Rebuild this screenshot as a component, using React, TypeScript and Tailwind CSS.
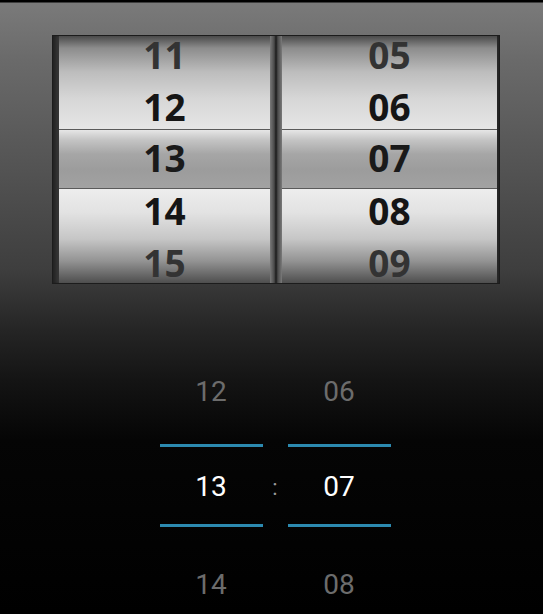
const font = { fontFamily: '"Open Sans", "DejaVu Sans", sans-serif' };
const roboto = { fontFamily: 'Roboto, "Liberation Sans", sans-serif' };

type WheelProps = { values: string[]; className?: string };

const digit = "flex items-center justify-center text-[37px] font-bold leading-none";

function Wheel({ values, className = "" }: WheelProps) {
  const [a, b, c, d, e] = values;
  return (
    <div
      className={`flex flex-col h-full shadow-[inset_6px_0_5px_-3px_rgba(0,0,0,0.45),inset_-6px_0_5px_-3px_rgba(0,0,0,0.45)] ${className}`}
      style={font}
    >
      {/* above selection */}
      <div className="h-[93px] flex flex-col bg-[linear-gradient(to_bottom,#4a4a4a_0px,#8c8c8c_12px,#bdbdbd_36px,#d6d6d6_62px,#e6e6e6_93px)]">
        <div className={`h-[40px] pb-[4px] ${digit} text-[#333]`}>{a}</div>
        <div className={`h-[53px] pt-[7px] ${digit} text-[#151515]`}>{b}</div>
      </div>
      {/* selection band */}
      <div
        className={`h-[60px] pb-[4px] border-y border-[#5a5a5a] ${digit} bg-[linear-gradient(to_bottom,#e6e6e6_0px,#c4c4c4_10px,#a6a6a6_24px,#9c9c9c_40px,#a2a2a2_58px)] text-[#1a1a1a]`}
      >
        {c}
      </div>
      {/* below selection */}
      <div className="flex-1 flex flex-col bg-[linear-gradient(to_bottom,#ededed_0px,#e2e2e2_24px,#c6c6c6_50px,#939393_72px,#4e4e4e_94px)]">
        <div className={`h-[46px] pb-[4px] ${digit} text-[#151515]`}>{d}</div>
        <div className={`h-[48px] pt-[6px] ${digit} text-[#333]`}>{e}</div>
      </div>
    </div>
  );
}

function PickerColumn({ values }: { values: string[] }) {
  const [top, mid, bottom] = values;
  return (
    <div className="w-[103px] flex flex-col" style={roboto}>
      <div className="h-[40px] flex items-center justify-center text-[28px] leading-none text-[#6c6c6c]">
        {top}
      </div>
      <div className="h-[32px]" />
      <div className="h-[3px] bg-[#2c8ab0]" />
      <div className="h-[77px] pt-[3px] flex items-center justify-center text-[28px] leading-none text-white">
        {mid}
      </div>
      <div className="h-[3px] bg-[#2c8ab0]" />
      <div className="h-[36px]" />
      <div className="h-[40px] pt-[4px] flex items-center justify-center text-[28px] leading-none text-[#6c6c6c]">
        {bottom}
      </div>
    </div>
  );
}

export default function App() {
  return (
    <div className="w-[543px] h-[614px] overflow-hidden flex flex-col bg-[linear-gradient(to_bottom,#000_0px,#000_2px,#7a7a7a_3px,#6a6a6a_60px,#3e3e3e_270px,#252525_330px,#141414_380px,#050505_440px,#000_614px)]">
      {/* Classic wheel picker */}
      <div className="mt-[35px] ml-[52px] w-[448px] h-[249px] border border-[#1c1c1c] bg-[#3a3a3a] flex">
        <Wheel values={["11", "12", "13", "14", "15"]} className="w-[217px] pl-[6px]" />
        <div className="w-[12px] h-full bg-[linear-gradient(to_right,#7a7a7a_0%,#4a4a4a_35%,#1a1a1a_50%,#4a4a4a_65%,#7a7a7a_100%)]" />
        <Wheel values={["05", "06", "07", "08", "09"]} className="flex-1 pr-[2px]" />
      </div>

      {/* Holo time picker */}
      <div className="mt-[88px] flex justify-center ml-[7px]">
        <PickerColumn values={["12", "13", "14"]} />
        <div className="w-[25px] flex flex-col" style={roboto}>
          <div className="h-[75px]" />
          <div className="h-[77px] pt-[4px] flex items-center justify-center text-[22px] leading-none text-[#9a9a9a]">
            :
          </div>
        </div>
        <PickerColumn values={["06", "07", "08"]} />
      </div>
    </div>
  );
}
